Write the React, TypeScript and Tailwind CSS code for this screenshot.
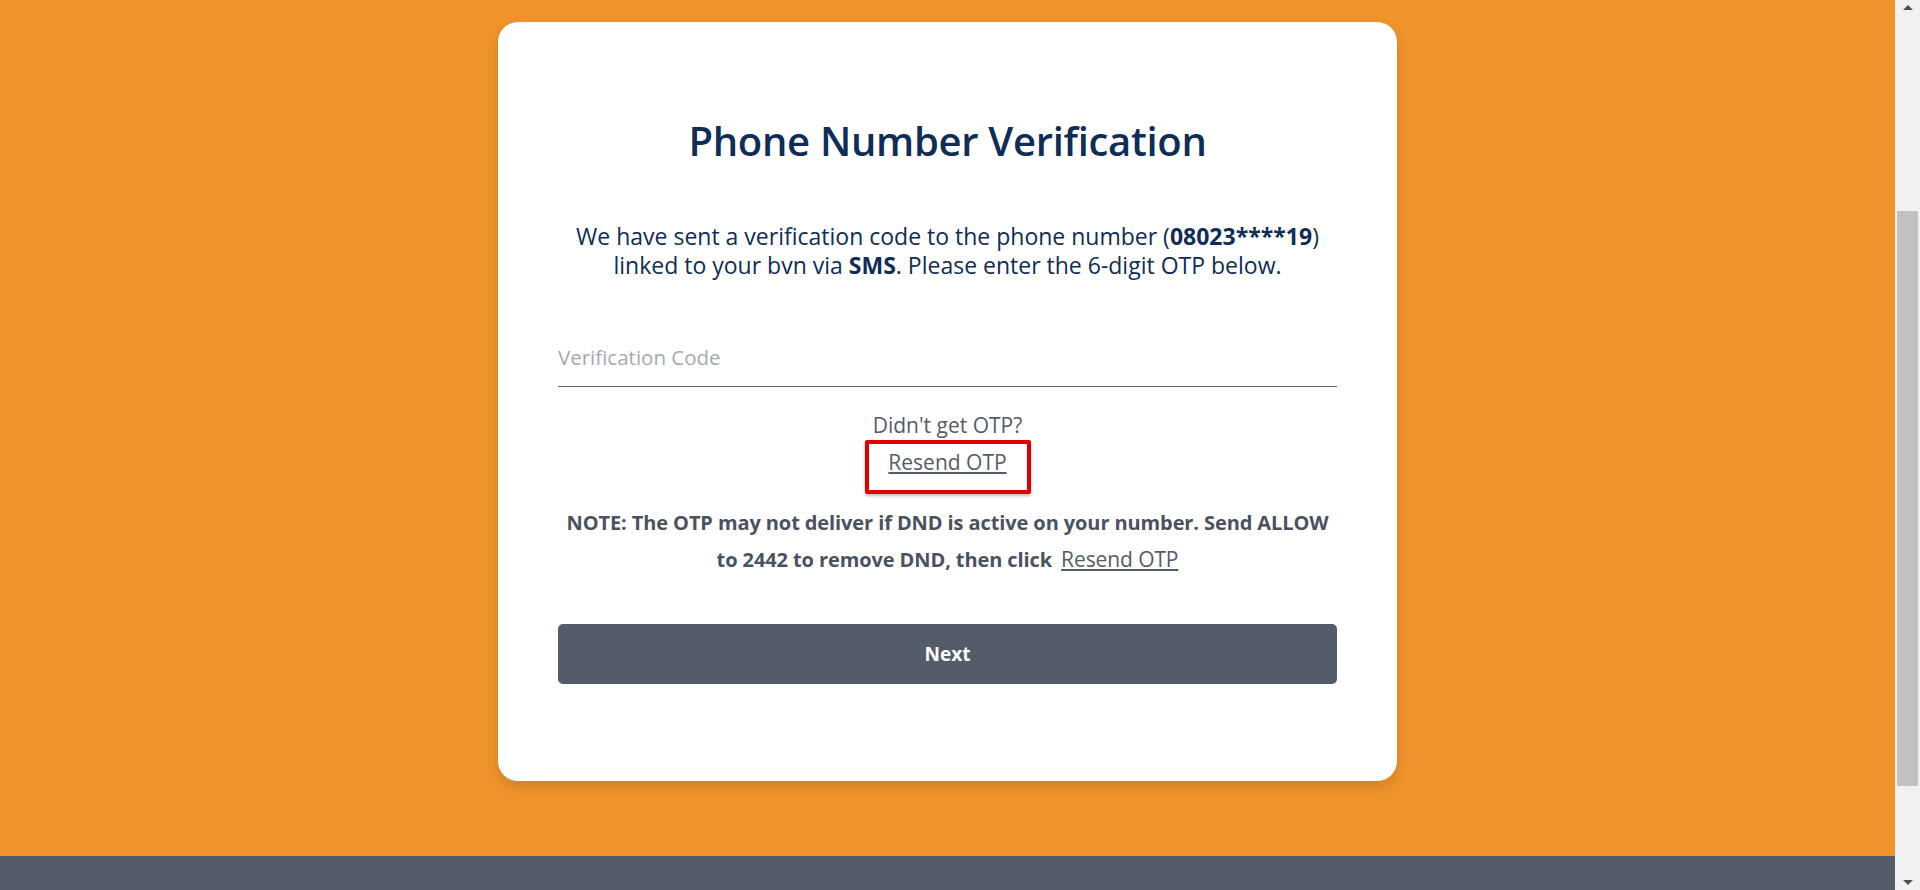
// OTP verification screen
export default function App() {
  return (
    <div className="flex h-[890px] w-full overflow-hidden font-['Open_Sans','Noto_Sans',sans-serif]">
      <div className="flex flex-1 flex-col">
        <main className="flex flex-1 justify-center bg-[#f0932b] pt-[22px]">
          <div className="flex h-[759px] w-[899px] flex-col items-center rounded-[20px] bg-white px-[60px] shadow-[0_6px_14px_rgba(0,0,0,0.12)]">
            <h1 className="mt-[96px] text-[40px] font-semibold leading-[46px] tracking-[-0.3px] text-[#0f2d57]">
              Phone Number Verification
            </h1>

            <p className="mt-[58px] whitespace-nowrap text-center text-[23px] leading-[29px] text-[#0f2d57]">
              We have sent a verification code to the phone number (<b>08023****19</b>)
              <br />
              linked to your bvn via <b>SMS</b>. Please enter the 6-digit OTP below.
            </p>

            <input
              placeholder="Verification Code"
              className="mt-[51px] h-[56px] w-full border-b border-[#5d6572] bg-transparent pb-[4px] text-[20.5px] text-[#333] outline-none placeholder:text-[#a3aab4]"
            />

            <p className="mt-[26px] text-[21px] leading-[24px] text-[#555c69]">Didn't get OTP?</p>

            <div className="mt-[3px] flex h-[54px] w-[166px] justify-center rounded-[2px] border-4 border-[#e00000] pt-[6px] shadow-[0_2px_3px_rgba(0,0,0,0.25)]">
              <a href="#" className="text-[21px] leading-[24px] text-[#555c69] underline underline-offset-2">
                Resend OTP
              </a>
            </div>

            <p className="mt-[10px] whitespace-nowrap text-center text-[20px] font-bold leading-[37px] tracking-[-0.1px] text-[#4a5261]">
              NOTE: The OTP may not deliver if DND is active on your number. Send ALLOW
              <br />
              to 2442 to remove DND, then click{' '}
              <a href="#" className="ml-1 text-[21px] font-normal text-[#555c69] underline underline-offset-2">
                Resend OTP
              </a>
            </p>

            <button className="mt-[46px] h-[60px] w-full rounded-[5px] bg-[#555c69] text-[19px] font-bold text-white">
              Next
            </button>
          </div>
        </main>
        <footer className="h-[34px] bg-[#555c69]" />
      </div>

      {/* scrollbar as shown in the screenshot */}
      <div className="flex w-[25px] flex-col items-center bg-[#f1f1f1]">
        <div className="mt-[5px] h-0 w-0 border-x-[5px] border-b-[5px] border-x-transparent border-b-[#505050]" />
        <div className="mt-[201px] h-[575px] w-[21px] bg-[#c1c1c1]" />
        <div className="flex-1" />
        <div className="mb-[5px] h-0 w-0 border-x-[5px] border-t-[5px] border-x-transparent border-t-[#505050]" />
      </div>
    </div>
  )
}
